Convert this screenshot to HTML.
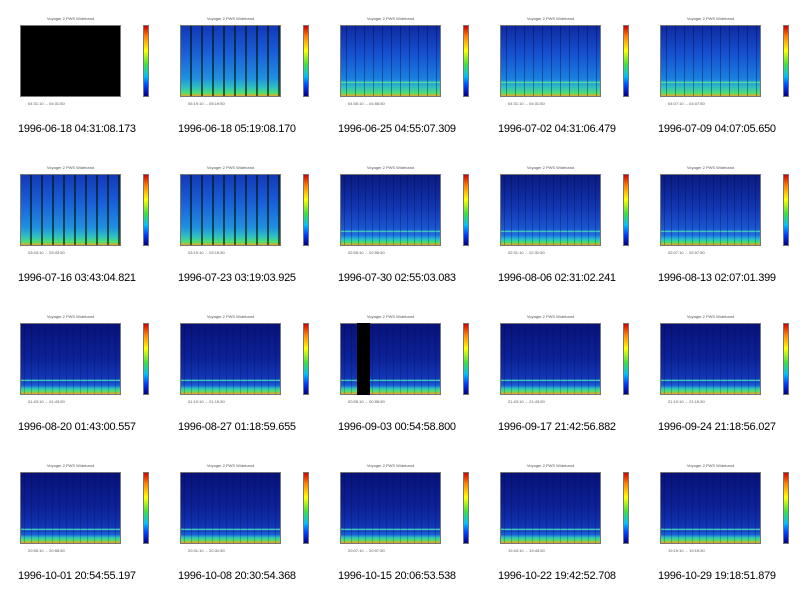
<!DOCTYPE html>
<html><head><meta charset="utf-8"><style>
body{margin:0;width:800px;height:596px;background:#fff;position:relative;overflow:hidden;font-family:"Liberation Sans",sans-serif}
.c{position:absolute;width:160px;height:149px}
.t{position:absolute;left:20px;top:16px;width:101px;text-align:center;font-size:4px;color:#555;white-space:nowrap}
.p{position:absolute;left:20px;top:25px;width:101px;height:72px;border:1px solid #777;box-sizing:border-box;
background:repeating-linear-gradient(to right,rgba(0,0,40,0) 0 3px,rgba(0,0,40,.25) 3px 4px,rgba(0,0,40,0) 4px 7px),linear-gradient(to bottom,rgba(0,0,0,0) 79%,#3fd0c0 80%,#3fd0c0 81%,rgba(0,0,0,0) 82%),linear-gradient(to bottom,#0a1a80 0%,#1235b0 45%,#1a55d0 75%,#1f70e0 86%,#25b8d8 91%,#40e070 96%,#f0a020 100%)}
.r1 .p{background:repeating-linear-gradient(to right,rgba(0,0,40,0) 0 5px,rgba(0,0,60,.35) 5px 6px,rgba(0,0,40,0) 6px 9px),linear-gradient(to bottom,rgba(0,0,0,0) 79%,#50e0a0 80%,#50e0a0 81%,rgba(0,0,0,0) 82%),linear-gradient(to bottom,#0e2aa0 0%,#1650d0 40%,#1a80e0 75%,#30c0c0 88%,#50e070 96%,#f0a020 100%)}
.r2 .p{background:repeating-linear-gradient(to right,rgba(0,0,0,0) 0 9px,rgba(0,20,0,.6) 9px 11px),linear-gradient(to bottom,#1238b8 0%,#1a60d8 40%,#2090e0 75%,#30c0c0 88%,#50e070 96%,#f0a020 100%)}
.dark .p{background:repeating-linear-gradient(to right,rgba(0,0,40,0) 0 3px,rgba(0,0,40,.2) 3px 4px,rgba(0,0,40,0) 4px 7px),linear-gradient(to bottom,rgba(0,0,0,0) 79%,#3fd0c0 80%,#3fd0c0 81%,rgba(0,0,0,0) 82%),linear-gradient(to bottom,#08127a 0%,#0c2298 50%,#1238b8 80%,#1a60d8 88%,#30c0c0 92%,#50e070 96%,#f0a020 100%)}
.blk .p{background:#000}
.cb{position:absolute;left:143px;top:25px;width:6px;height:72px;border:1px solid #777;box-sizing:border-box;
background:linear-gradient(to bottom,#d00000,#ff8000 15%,#ffff00 35%,#40e040 55%,#00c0ff 72%,#0040ff 85%,#000080)}
.a{position:absolute;top:101px;left:28px;font-size:4px;color:#555;white-space:nowrap}
.cap{position:absolute;left:18px;top:123px;font-size:11px;color:#000;white-space:nowrap;letter-spacing:-0.25px}
</style></head><body>
<div class="c blk" style="left:0;top:0"><div class="t">Voyager 2 PWS Wideband</div><div class="p"></div><div class="cb"></div><div class="a">04:31:10 ... 04:31:50</div><div class="cap">1996-06-18 04:31:08.173</div></div>
<div class="c r2" style="left:160px;top:0"><div class="t">Voyager 2 PWS Wideband</div><div class="p"></div><div class="cb"></div><div class="a">05:19:10 ... 05:19:50</div><div class="cap">1996-06-18 05:19:08.170</div></div>
<div class="c r1" style="left:320px;top:0"><div class="t">Voyager 2 PWS Wideband</div><div class="p"></div><div class="cb"></div><div class="a">04:55:10 ... 04:55:50</div><div class="cap">1996-06-25 04:55:07.309</div></div>
<div class="c r1" style="left:480px;top:0"><div class="t">Voyager 2 PWS Wideband</div><div class="p"></div><div class="cb"></div><div class="a">04:31:10 ... 04:31:50</div><div class="cap">1996-07-02 04:31:06.479</div></div>
<div class="c r1" style="left:640px;top:0"><div class="t">Voyager 2 PWS Wideband</div><div class="p"></div><div class="cb"></div><div class="a">04:07:10 ... 04:07:50</div><div class="cap">1996-07-09 04:07:05.650</div></div>

<div class="c r2" style="left:0;top:149px"><div class="t">Voyager 2 PWS Wideband</div><div class="p"></div><div class="cb"></div><div class="a">03:43:10 ... 03:43:50</div><div class="cap">1996-07-16 03:43:04.821</div></div>
<div class="c r2" style="left:160px;top:149px"><div class="t">Voyager 2 PWS Wideband</div><div class="p"></div><div class="cb"></div><div class="a">03:19:10 ... 03:19:50</div><div class="cap">1996-07-23 03:19:03.925</div></div>
<div class="c" style="left:320px;top:149px"><div class="t">Voyager 2 PWS Wideband</div><div class="p"></div><div class="cb"></div><div class="a">02:55:10 ... 02:55:50</div><div class="cap">1996-07-30 02:55:03.083</div></div>
<div class="c" style="left:480px;top:149px"><div class="t">Voyager 2 PWS Wideband</div><div class="p"></div><div class="cb"></div><div class="a">02:31:10 ... 02:31:50</div><div class="cap">1996-08-06 02:31:02.241</div></div>
<div class="c" style="left:640px;top:149px"><div class="t">Voyager 2 PWS Wideband</div><div class="p"></div><div class="cb"></div><div class="a">02:07:10 ... 02:07:50</div><div class="cap">1996-08-13 02:07:01.399</div></div>

<div class="c dark" style="left:0;top:298px"><div class="t">Voyager 2 PWS Wideband</div><div class="p"></div><div class="cb"></div><div class="a">01:43:10 ... 01:43:50</div><div class="cap">1996-08-20 01:43:00.557</div></div>
<div class="c dark" style="left:160px;top:298px"><div class="t">Voyager 2 PWS Wideband</div><div class="p"></div><div class="cb"></div><div class="a">01:19:10 ... 01:19:50</div><div class="cap">1996-08-27 01:18:59.655</div></div>
<div class="c dark" style="left:320px;top:298px"><div class="t">Voyager 2 PWS Wideband</div><div class="p"></div><div style="position:absolute;left:37px;top:25px;width:13px;height:72px;background:#000"></div><div class="cb"></div><div class="a">00:55:10 ... 00:55:50</div><div class="cap">1996-09-03 00:54:58.800</div></div>
<div class="c dark" style="left:480px;top:298px"><div class="t">Voyager 2 PWS Wideband</div><div class="p"></div><div class="cb"></div><div class="a">21:43:10 ... 21:43:50</div><div class="cap">1996-09-17 21:42:56.882</div></div>
<div class="c dark" style="left:640px;top:298px"><div class="t">Voyager 2 PWS Wideband</div><div class="p"></div><div class="cb"></div><div class="a">21:19:10 ... 21:19:50</div><div class="cap">1996-09-24 21:18:56.027</div></div>

<div class="c dark" style="left:0;top:447px"><div class="t">Voyager 2 PWS Wideband</div><div class="p"></div><div class="cb"></div><div class="a">20:55:10 ... 20:55:50</div><div class="cap">1996-10-01 20:54:55.197</div></div>
<div class="c dark" style="left:160px;top:447px"><div class="t">Voyager 2 PWS Wideband</div><div class="p"></div><div class="cb"></div><div class="a">20:31:10 ... 20:31:50</div><div class="cap">1996-10-08 20:30:54.368</div></div>
<div class="c dark" style="left:320px;top:447px"><div class="t">Voyager 2 PWS Wideband</div><div class="p"></div><div class="cb"></div><div class="a">20:07:10 ... 20:07:50</div><div class="cap">1996-10-15 20:06:53.538</div></div>
<div class="c dark" style="left:480px;top:447px"><div class="t">Voyager 2 PWS Wideband</div><div class="p"></div><div class="cb"></div><div class="a">19:43:10 ... 19:43:50</div><div class="cap">1996-10-22 19:42:52.708</div></div>
<div class="c dark" style="left:640px;top:447px"><div class="t">Voyager 2 PWS Wideband</div><div class="p"></div><div class="cb"></div><div class="a">19:19:10 ... 19:19:50</div><div class="cap">1996-10-29 19:18:51.879</div></div>
</body></html>
